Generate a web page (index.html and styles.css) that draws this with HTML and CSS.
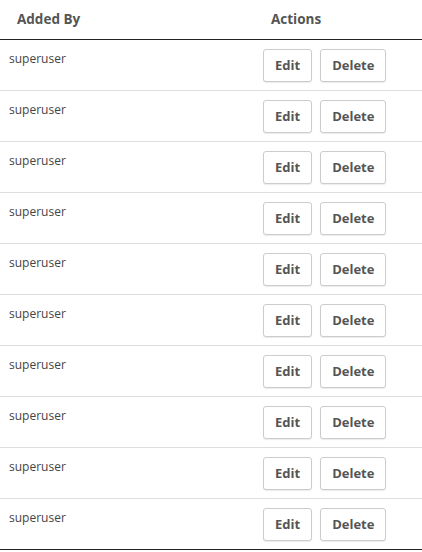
FILE: index.html
```html
<!DOCTYPE html>
<html lang="en">
<head>
  <meta charset="UTF-8" />
  <title>Users</title>
  <link rel="stylesheet" href="styles.css">
</head>
<body>

  <!-- user list -->
  <table class="user-table">
    <thead>
      <tr>
        <th class="col-by">Added By</th>
        <th>Actions</th>
      </tr>
    </thead>
    <tbody>
      <tr><td class="name">superuser</td><td><button class="btn">Edit</button><button class="btn">Delete</button></td></tr>
      <tr><td class="name">superuser</td><td><button class="btn">Edit</button><button class="btn">Delete</button></td></tr>
      <tr><td class="name">superuser</td><td><button class="btn">Edit</button><button class="btn">Delete</button></td></tr>
      <tr><td class="name">superuser</td><td><button class="btn">Edit</button><button class="btn">Delete</button></td></tr>
      <tr><td class="name">superuser</td><td><button class="btn">Edit</button><button class="btn">Delete</button></td></tr>
      <tr><td class="name">superuser</td><td><button class="btn">Edit</button><button class="btn">Delete</button></td></tr>
      <tr><td class="name">superuser</td><td><button class="btn">Edit</button><button class="btn">Delete</button></td></tr>
      <tr><td class="name">superuser</td><td><button class="btn">Edit</button><button class="btn">Delete</button></td></tr>
      <tr><td class="name">superuser</td><td><button class="btn">Edit</button><button class="btn">Delete</button></td></tr>
      <tr><td class="name">superuser</td><td><button class="btn">Edit</button><button class="btn">Delete</button></td></tr>
    </tbody>
  </table>

</body>
</html>
```

FILE: styles.css
```css
* {
  box-sizing: border-box;
  margin: 0;
  padding: 0;
}

body {
  font-family: 'Open Sans', sans-serif;
  background: #fff;
  color: #444;
}

.user-table {
  width: 422px;
  border-collapse: collapse;
  border-bottom: 1px solid #222;
}

.user-table th {
  height: 39px;
  text-align: left;
  font-size: 13.5px;
  font-weight: bold;
  color: #555;
  padding: 0 17px;
  border-bottom: 1px solid #222;
  vertical-align: middle;
}

.user-table .col-by {
  width: 254px;
}

.user-table td {
  height: 51px;
  font-size: 12px;
  line-height: 16px;
  padding: 9px 9px 8px;
  vertical-align: top;
  border-top: 1px solid #ddd;
}

.user-table td.name {
  padding-top: 11px;
}

.user-table tbody tr:first-child td {
  border-top: none;
}

.btn {
  font-family: 'Open Sans', sans-serif;
  font-size: 13px;
  font-weight: bold;
  color: #555;
  background: #fff;
  border: 1px solid #ccc;
  border-radius: 3px;
  box-shadow: 0 1px 1px rgba(0,0,0,0.08);
  height: 33px;
  padding: 0 11px;
  margin-right: 8px;
  cursor: pointer;
}
```
